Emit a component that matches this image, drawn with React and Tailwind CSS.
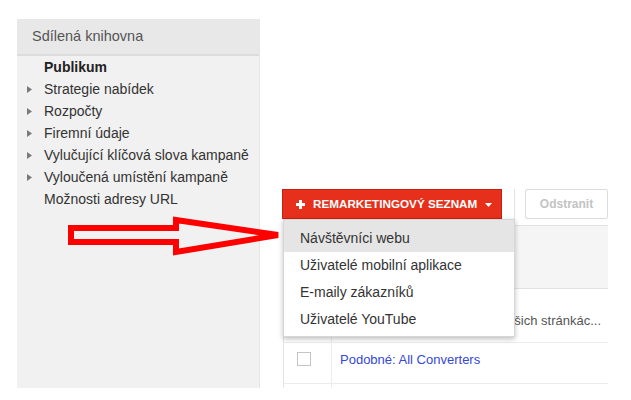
import React from "react";

const sideItems = [
  { label: "Strategie nabídek", arrow: true },
  { label: "Rozpočty", arrow: true },
  { label: "Firemní údaje", arrow: true },
  { label: "Vylučující klíčová slova kampaně", arrow: true },
  { label: "Vyloučená umístění kampaně", arrow: true },
  { label: "Možnosti adresy URL", arrow: false },
];

const menuItems = [
  "Návštěvníci webu",
  "Uživatelé mobilní aplikace",
  "E-maily zákazníků",
  "Uživatelé YouTube",
];

const Sidebar = () => (
  <div className="ml-[17px] mt-[19px] w-[243px] h-[369px] bg-[#f1f1f1] border-r border-[#e6e6e6]">
    {/* header */}
    <div className="h-[37px] pl-[15px] flex items-center bg-[#e8e8e8] border-b-2 border-[#dcdcdc] text-[14.5px] text-[#555]">
      Sdílená knihovna
    </div>
    <div className="h-[22px] pl-[27px] flex items-center text-[14px] font-bold text-[#222]">
      Publikum
    </div>
    {sideItems.map((item) => (
      <div key={item.label} className="h-[22px] flex items-center pl-[10px] text-[14px] text-[#333]">
        <span className="w-[17px] flex items-center">
          {item.arrow && (
            <svg width="5" height="7" viewBox="0 0 5 7">
              <path d="M0 0 L5 3.5 L0 7 Z" fill="#7a7a7a" />
            </svg>
          )}
        </span>
        {item.label}
      </div>
    ))}
  </div>
);

const Toolbar = () => (
  <div className="flex items-start h-[30px]">
    <div className="relative">
      <button className="w-[220px] h-[30px] flex items-center bg-[#e6301b] border border-[#c9210f] text-white text-[11.7px] font-bold pl-[13px]">
        <svg width="9" height="9" viewBox="0 0 9 9" className="mr-[8px]">
          <path d="M3 0h3v3h3v3H6v3H3V6H0V3h3z" fill="#fff" />
        </svg>
        REMARKETINGOVÝ SEZNAM
        <svg width="7" height="4" viewBox="0 0 7 4" className="ml-[8px] mt-[2px]">
          <path d="M0 0h7L3.5 4z" fill="#fff" />
        </svg>
      </button>
      <div className="absolute left-[1px] top-[30px] z-10 w-[232px] bg-white border border-[#d6d6d6] shadow-[0_2px_5px_rgba(0,0,0,0.25)] pb-[3px]">
        {menuItems.map((m, i) => (
          <div
            key={m}
            className={`h-[27px] pl-[16px] flex items-center text-[14px] text-[#333] ${i === 0 ? "bg-[#e5e5e5] h-[32px] pt-[5px]" : ""}`}
          >
            {m}
          </div>
        ))}
      </div>
    </div>
    <div className="ml-[12px] w-px h-[31px] bg-[#e2e2e2]" />
    <button className="ml-[10px] w-[83px] h-[30px] border border-[#dcdcdc] rounded-[2px] bg-white text-[12px] font-bold text-[#c3c3c3]">
      Odstranit
    </button>
  </div>
);

const Table = () => (
  <div className="mt-[6px] ml-[1px] w-[325px] h-[163px] overflow-hidden border-l border-[#e4e4e4]">
    <div className="h-[64px] bg-[#f5f5f5] border-t border-b border-[#e2e2e2]" />
    <div className="flex h-[54px] border-b border-[#ececec]">
      <div className="w-[48px] border-r border-[#ececec]" />
      <div className="flex-1 overflow-hidden flex items-start justify-end pt-[22px] pr-[7px] text-[13px] text-[#555] whitespace-nowrap">
        Lidé, kteří navštívili některou z vašich stránkác...
      </div>
    </div>
    <div className="flex h-[41px] border-b border-[#ececec]">
      <div className="w-[48px] border-r border-[#ececec] pl-[13px] pt-[9px]">
        <div className="w-[14px] h-[14px] border border-[#c4c4c4] bg-white" />
      </div>
      <div className="flex-1 pl-[8px] pt-[7px] text-[13px] text-[#3347d9]">
        Podobné: All Converters
      </div>
    </div>
    <div className="flex h-[20px]">
      <div className="w-[48px] border-r border-[#ececec]" />
    </div>
  </div>
);

export default function App() {
  return (
    <div
      className="relative w-[631px] h-[400px] bg-white flex items-start overflow-hidden"
      style={{ fontFamily: '"Liberation Sans", Arial, sans-serif' }}
    >
      <Sidebar />
      <div className="pl-[22px] pt-[189px]">
        <Toolbar />
        <Table />
      </div>
      {/* red annotation arrow */}
      <svg className="absolute left-0 top-0 pointer-events-none z-20" width="631" height="400">
        <polygon
          points="71,228 176,228 176,220 278,235 176,252 176,242 71,242"
          fill="none"
          stroke="#ff0000"
          strokeWidth="6"
        />
      </svg>
    </div>
  );
}
